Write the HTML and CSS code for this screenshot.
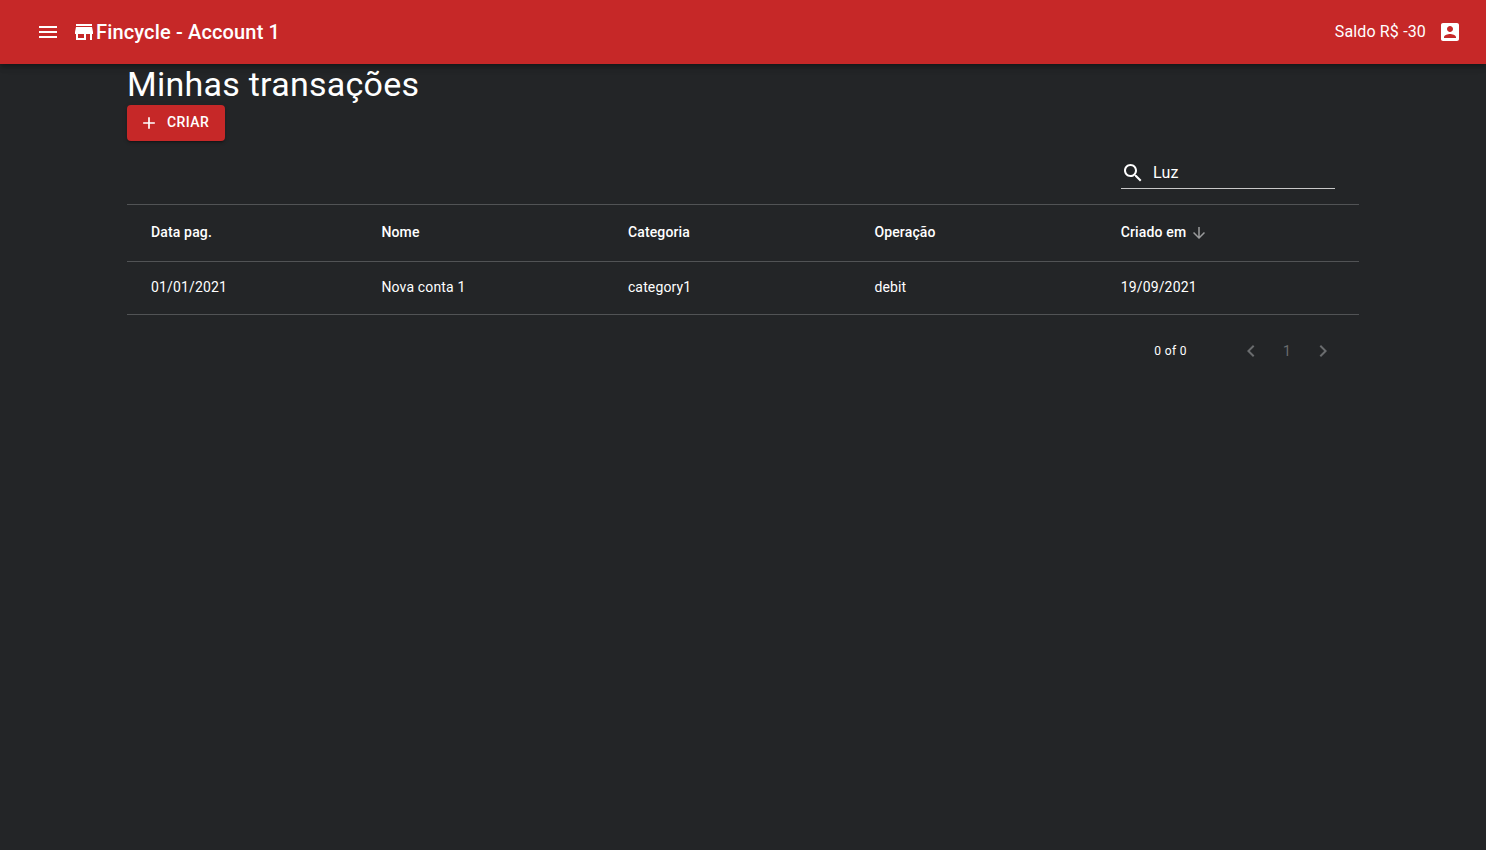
FILE: index.html
```html
<!DOCTYPE html>
<html lang="en">
<head>
  <meta charset="UTF-8" />
  <title>Fincycle - Minhas transações</title>
  <link rel="stylesheet" href="styles.css">
</head>
<body>
  <header class="app-bar">
    <svg class="menu-icon" viewBox="0 0 24 24"><path d="M3 18h18v-2H3v2zm0-5h18v-2H3v2zm0-7v2h18V6H3z"/></svg>
    <svg class="store-icon" viewBox="0 0 24 24"><path d="M20 4H4v2h16V4zm1 10v-2l-1-5H4l-1 5v2h1v6h10v-6h4v6h2v-6h1zm-9 4H6v-4h6v4z"/></svg>
    <h1 class="app-title">Fincycle - Account 1</h1>
    <span class="balance">Saldo R$ -30</span>
    <svg class="account-icon" viewBox="0 0 24 24"><path d="M3 5v14c0 1.1.89 2 2 2h14c1.1 0 2-.9 2-2V5c0-1.1-.9-2-2-2H5c-1.11 0-2 .9-2 2zm12 4c0 1.66-1.34 3-3 3s-3-1.34-3-3 1.34-3 3-3 3 1.34 3 3zm-9 8c0-2 4-3.1 6-3.1s6 1.1 6 3.1v1H6v-1z"/></svg>
  </header>

  <main class="content">
    <h2 class="page-title">Minhas transações</h2>
    <button class="create-btn">
      <svg viewBox="0 0 24 24"><path d="M19 13h-6v6h-2v-6H5v-2h6V5h2v6h6v2z"/></svg>
      <span class="create-label">CRIAR</span>
    </button>

    <div class="search-row">
      <label class="search-field">
        <svg viewBox="0 0 24 24"><path d="M15.5 14h-.79l-.28-.27C15.41 12.59 16 11.11 16 9.5 16 5.91 13.09 3 9.5 3S3 5.91 3 9.5 5.91 16 9.5 16c1.61 0 3.09-.59 4.23-1.57l.27.28v.79l5 4.99L20.49 19l-4.99-5zm-6 0C7.01 14 5 11.99 5 9.5S7.01 5 9.5 5 14 7.01 14 9.5 11.99 14 9.5 14z"/></svg>
        <input type="text" value="Luz" />
      </label>
    </div>

    <table class="data-table">
      <thead>
        <tr>
          <th class="col-date">Data pag.</th>
          <th class="col-name">Nome</th>
          <th class="col-cat">Categoria</th>
          <th class="col-op">Operação</th>
          <th>
            Criado em
            <svg class="sort-icon" viewBox="0 0 24 24"><path d="M20 12l-1.41-1.41L13 16.17V4h-2v12.17l-5.58-5.59L4 12l8 8 8-8z"/></svg>
          </th>
        </tr>
      </thead>
      <tbody>
        <tr>
          <td>01/01/2021</td>
          <td>Nova conta 1</td>
          <td>category1</td>
          <td>debit</td>
          <td>19/09/2021</td>
        </tr>
      </tbody>
    </table>

    <div class="pagination">
      <span class="page-count">0 of 0</span>
      <svg class="page-arrow" viewBox="0 0 24 24"><path d="M15.41 7.41L14 6l-6 6 6 6 1.41-1.41L10.83 12z"/></svg>
      <span class="page-number">1</span>
      <svg class="page-arrow" viewBox="0 0 24 24"><path d="M10 6L8.59 7.41 13.17 12l-4.58 4.59L10 18l6-6z"/></svg>
    </div>
  </main>
</body>
</html>
```

FILE: styles.css
```css
/* Basic reset */
* {
  margin: 0;
  padding: 0;
  box-sizing: border-box;
}

body {
  background-color: #232527;
  color: #ffffff;
  font-family: Roboto, "Liberation Sans", sans-serif;
  min-height: 100vh;
}

svg {
  fill: currentColor;
  display: block;
}

/* Top bar */
.app-bar {
  height: 64px;
  background-color: #c62828;
  display: flex;
  align-items: center;
  padding: 0 24px 0 36px;
  box-shadow: 0 2px 4px -1px rgba(0, 0, 0, 0.2), 0 4px 5px rgba(0, 0, 0, 0.14), 0 1px 10px rgba(0, 0, 0, 0.12);
}

.menu-icon {
  width: 24px;
  height: 24px;
  margin-right: 12px;
}

.store-icon {
  width: 24px;
  height: 24px;
}

.app-title {
  flex: 1;
  font-size: 20px;
  font-weight: 500;
  line-height: 32px;
  letter-spacing: 0.15px;
}

.balance {
  font-size: 16px;
  letter-spacing: 0.15px;
  margin-right: 12px;
  padding-bottom: 2px;
}

.account-icon {
  width: 24px;
  height: 24px;
}

/* Main content */
.content {
  width: 1232px;
  margin-left: 127px;
}

.page-title {
  font-size: 34px;
  font-weight: 400;
  line-height: 41px;
  letter-spacing: 0.25px;
}

.create-btn {
  display: flex;
  align-items: center;
  height: 36px;
  padding: 0 16px 0 12px;
  border: none;
  border-radius: 4px;
  background-color: #c62828;
  color: #ffffff;
  font-family: inherit;
  font-size: 14px;
  font-weight: 500;
  letter-spacing: 0.4px;
  box-shadow: 0 3px 1px -2px rgba(0, 0, 0, 0.2), 0 2px 2px rgba(0, 0, 0, 0.14), 0 1px 5px rgba(0, 0, 0, 0.12);
}

.create-btn svg {
  width: 20px;
  height: 20px;
  margin-right: 8px;
}

.create-label {
  padding-bottom: 2px;
}

/* Search */
.search-row {
  display: flex;
  justify-content: flex-end;
  height: 63px;
  padding: 16px 24px 0 0;
}

.search-field {
  display: flex;
  align-items: center;
  width: 214px;
  height: 32px;
  border-bottom: 1px solid #c8c8c8;
}

.search-field svg {
  width: 24px;
  height: 24px;
  margin-right: 8px;
}

.search-field input {
  flex: 1;
  min-width: 0;
  background: none;
  border: none;
  outline: none;
  color: #ffffff;
  font-family: inherit;
  font-size: 16px;
  letter-spacing: 0.15px;
}

/* Table */
.data-table {
  width: 100%;
  table-layout: fixed;
  border-collapse: collapse;
  border-top: 1px solid #515355;
  font-size: 14px;
  letter-spacing: 0.15px;
}

.col-date { width: 230.4px; }
.col-name, .col-cat { width: 246.5px; }
.col-op { width: 246.3px; }

.data-table th,
.data-table td {
  padding: 0 24px 2px;
  text-align: left;
  border-bottom: 1px solid #515355;
}

.data-table th {
  height: 57px;
  font-weight: 500;
}

.data-table td {
  height: 53px;
  font-weight: 400;
}

.sort-icon {
  display: inline-block;
  width: 18px;
  height: 18px;
  margin: -4px 0 -4px 0;
  vertical-align: middle;
  color: #9a9b9c;
}

/* Pagination */
.pagination {
  display: flex;
  align-items: center;
  height: 72px;
  padding-right: 24px;
  justify-content: flex-end;
}

.page-count {
  font-size: 12px;
  font-weight: 400;
  letter-spacing: 0.4px;
  margin-right: 52px;
}

.page-arrow {
  width: 24px;
  height: 24px;
  color: #6a6c6e;
}

.page-number {
  width: 48px;
  text-align: center;
  font-size: 14px;
  letter-spacing: 0.15px;
  color: #6a6c6e;
}
```
